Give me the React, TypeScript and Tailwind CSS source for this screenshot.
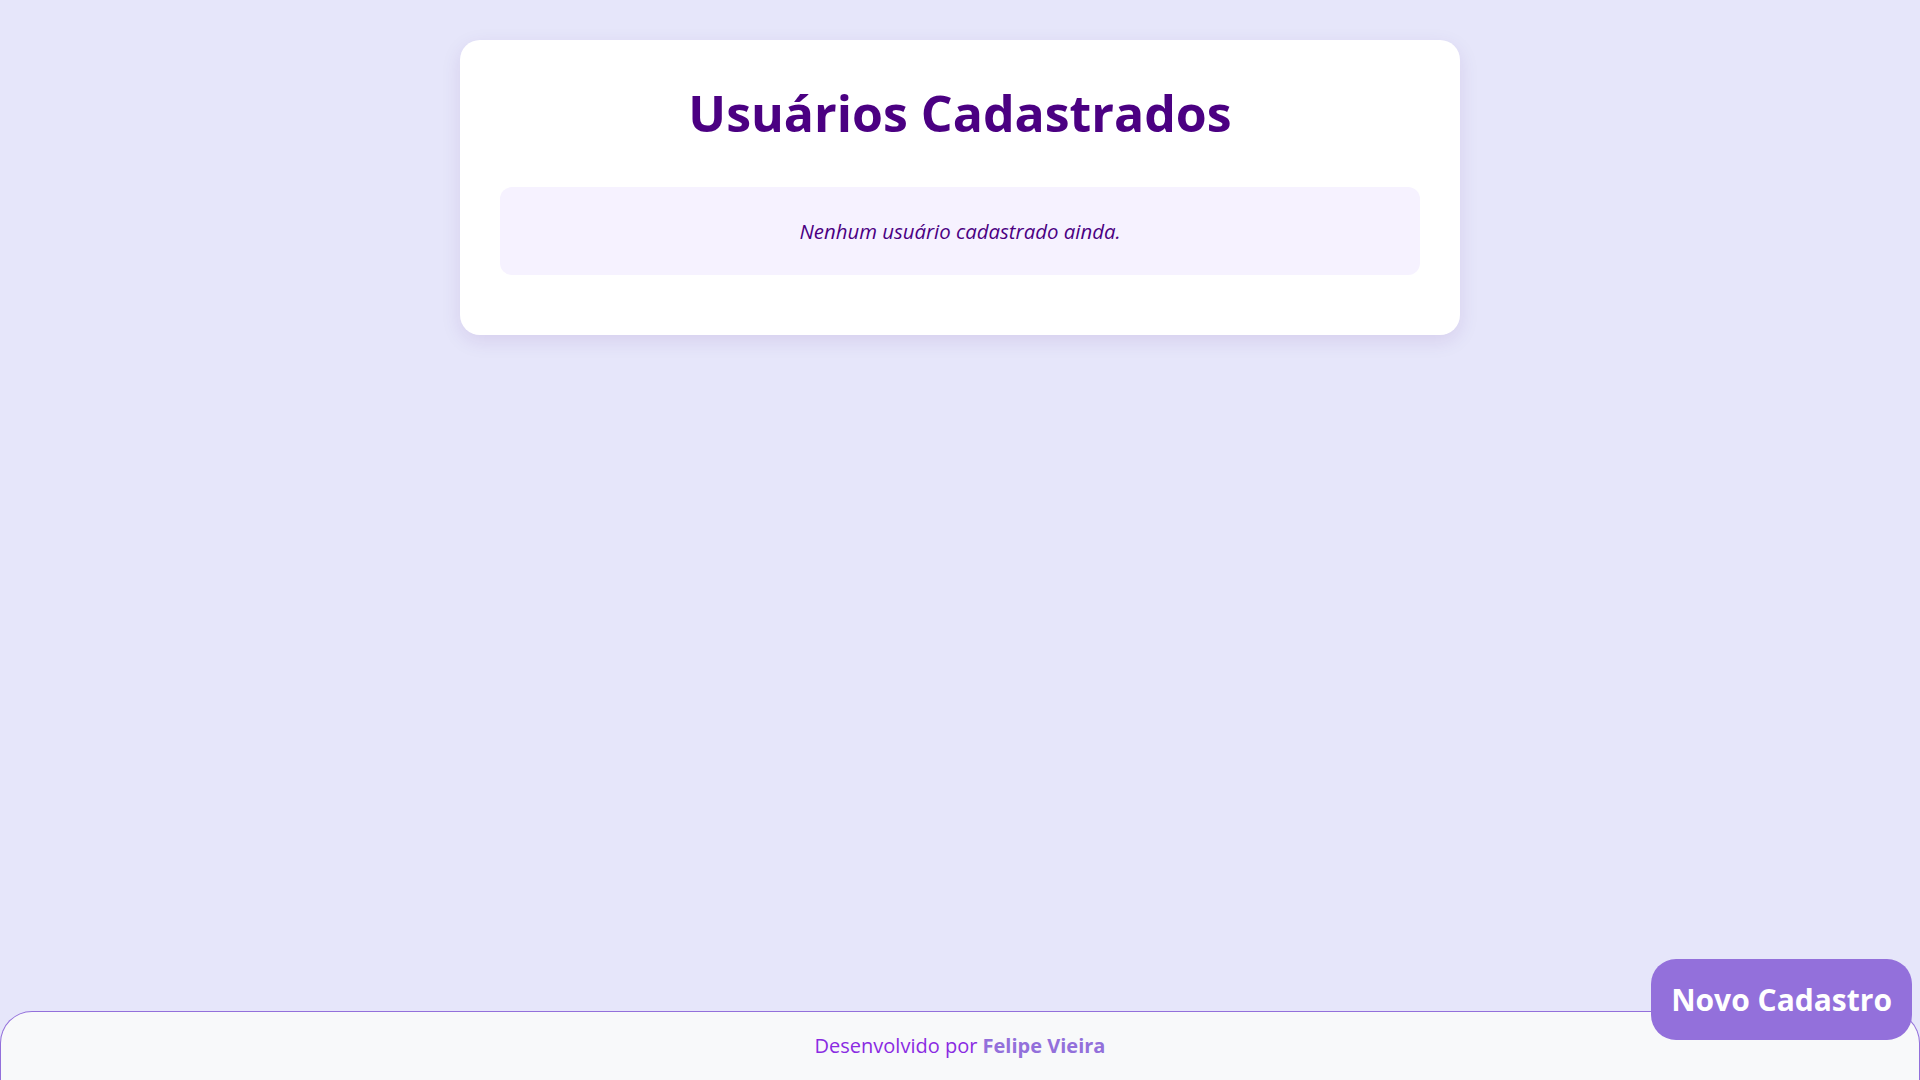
import React from "react";

export default function App() {
  return (
    <div
      className="min-h-screen w-full bg-[#e6e6fa] relative"
      style={{ fontFamily: '"Open Sans", "Noto Sans", sans-serif' }}
    >
      <div className="pt-[40px] flex justify-center">
        <div className="w-[1000px] bg-white rounded-[20px] shadow-[0_6px_20px_rgba(75,0,130,0.1)] px-[40px] pt-[40px] pb-[60px]">
          <h1 className="text-center text-[50px] leading-[66px] font-bold text-[#4b0082]">
            Usuários Cadastrados
          </h1>
          <div className="mt-[41px] h-[88px] bg-[#f6f2ff] rounded-[12px] flex items-center justify-center">
            <p className="italic text-[20.4px] font-medium text-[#4b0082]">
              Nenhum usuário cadastrado ainda.
            </p>
          </div>
        </div>
      </div>

      <button className="fixed right-[8px] bottom-[40px] z-10 bg-[#9370db] text-white font-bold text-[30px] leading-[41px] px-[20px] py-[20px] rounded-[25px]">
        Novo Cadastro
      </button>

      <footer className="fixed left-0 right-0 bottom-0 h-[69px] bg-[#f8f9fa] border border-[#9370db] border-b-0 rounded-t-[32px] flex items-center justify-center">
        <p className="text-[20px] text-[#8a2be2]">
          Desenvolvido por{" "}
          <span className="font-bold text-[#9370db]">Felipe Vieira</span>
        </p>
      </footer>
    </div>
  );
}
